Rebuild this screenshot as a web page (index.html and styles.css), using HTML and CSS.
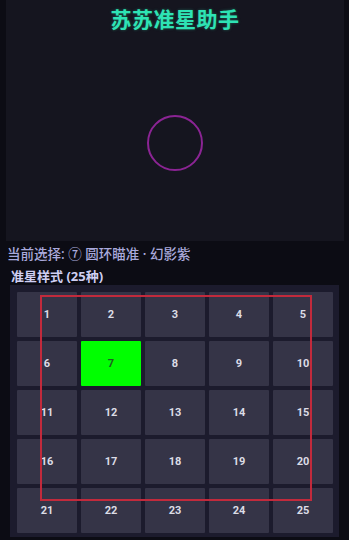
FILE: index.html
```html
<!DOCTYPE html>
<html lang="zh">
<head>
<meta charset="utf-8">
<title>苏苏准星助手</title>
<link rel="stylesheet" href="styles.css">
</head>
<body>
<div class="app">
  <div class="preview">
    <h1 class="title">苏苏准星助手</h1>
    <div class="crosshair"></div>
  </div>
  <div class="status">当前选择: ⑦ 圆环瞄准 · 幻影紫</div>
  <div class="section-title">准星样式 (25种)</div>
  <div class="grid-wrap">
    <div class="grid">
      <div class="cell">1</div><div class="cell">2</div><div class="cell">3</div><div class="cell">4</div><div class="cell">5</div>
      <div class="cell">6</div><div class="cell selected">7</div><div class="cell">8</div><div class="cell">9</div><div class="cell">10</div>
      <div class="cell">11</div><div class="cell">12</div><div class="cell">13</div><div class="cell">14</div><div class="cell">15</div>
      <div class="cell">16</div><div class="cell">17</div><div class="cell">18</div><div class="cell">19</div><div class="cell">20</div>
      <div class="cell">21</div><div class="cell">22</div><div class="cell">23</div><div class="cell">24</div><div class="cell">25</div>
    </div>
    <div class="frame"></div>
  </div>
</div>
</body>
</html>
```
FILE: styles.css
```css
html, body {
  margin: 0;
  padding: 0;
  background: #0c0c14;
  font-family: "Noto Sans CJK SC", "Noto Sans", sans-serif;
}
.app {
  width: 349px;
  height: 540px;
  overflow: hidden;
  display: flex;
  flex-direction: column;
}
.preview {
  margin: 0 5px 0 6px;
  height: 241px;
  background: #15151f;
  display: flex;
  flex-direction: column;
  align-items: center;
}
.title {
  margin: 0;
  padding-top: 4px;
  font-size: 21px;
  line-height: 28px;
  font-weight: 700;
  color: #2ee3b4;
  text-shadow: 0 0 3px rgba(46, 227, 180, 0.35);
  letter-spacing: 0.5px;
}
.crosshair {
  margin-top: 83px;
  width: 52px;
  height: 52px;
  border: 2px solid #8b2494;
  border-radius: 50%;
}
.status {
  padding: 3px 0 0 7px;
  font-family: "Noto Sans", "Noto Sans CJK SC", sans-serif;
  font-size: 13.5px;
  line-height: 20px;
  font-weight: 500;
  color: #a9a9dc;
}
.section-title {
  padding: 3px 0 0 11px;
  font-family: "Noto Sans", "Noto Sans CJK SC", sans-serif;
  font-size: 13px;
  line-height: 18px;
  font-weight: 700;
  color: #cfcff2;
}
.grid-wrap {
  position: relative;
  margin-left: 10px;
  width: 316px;
  padding: 7px 6px 4px 7px;
  background: #1c1b2d;
}
.grid {
  display: grid;
  grid-template-columns: repeat(5, 60px);
  grid-auto-rows: 45px;
  gap: 4px;
}
.cell {
  background: #353447;
  border-radius: 1px;
  display: flex;
  align-items: center;
  justify-content: center;
  font-family: Roboto, "Noto Sans", sans-serif;
  font-size: 11px;
  font-weight: 700;
  color: #dcdce6;
}
.cell.selected {
  background: #00ff00;
  color: #1f5c22;
}
.frame {
  position: absolute;
  left: 30px;
  top: 10px;
  width: 268px;
  height: 202px;
  border: 2px solid #c22a3c;
  pointer-events: none;
}
```
